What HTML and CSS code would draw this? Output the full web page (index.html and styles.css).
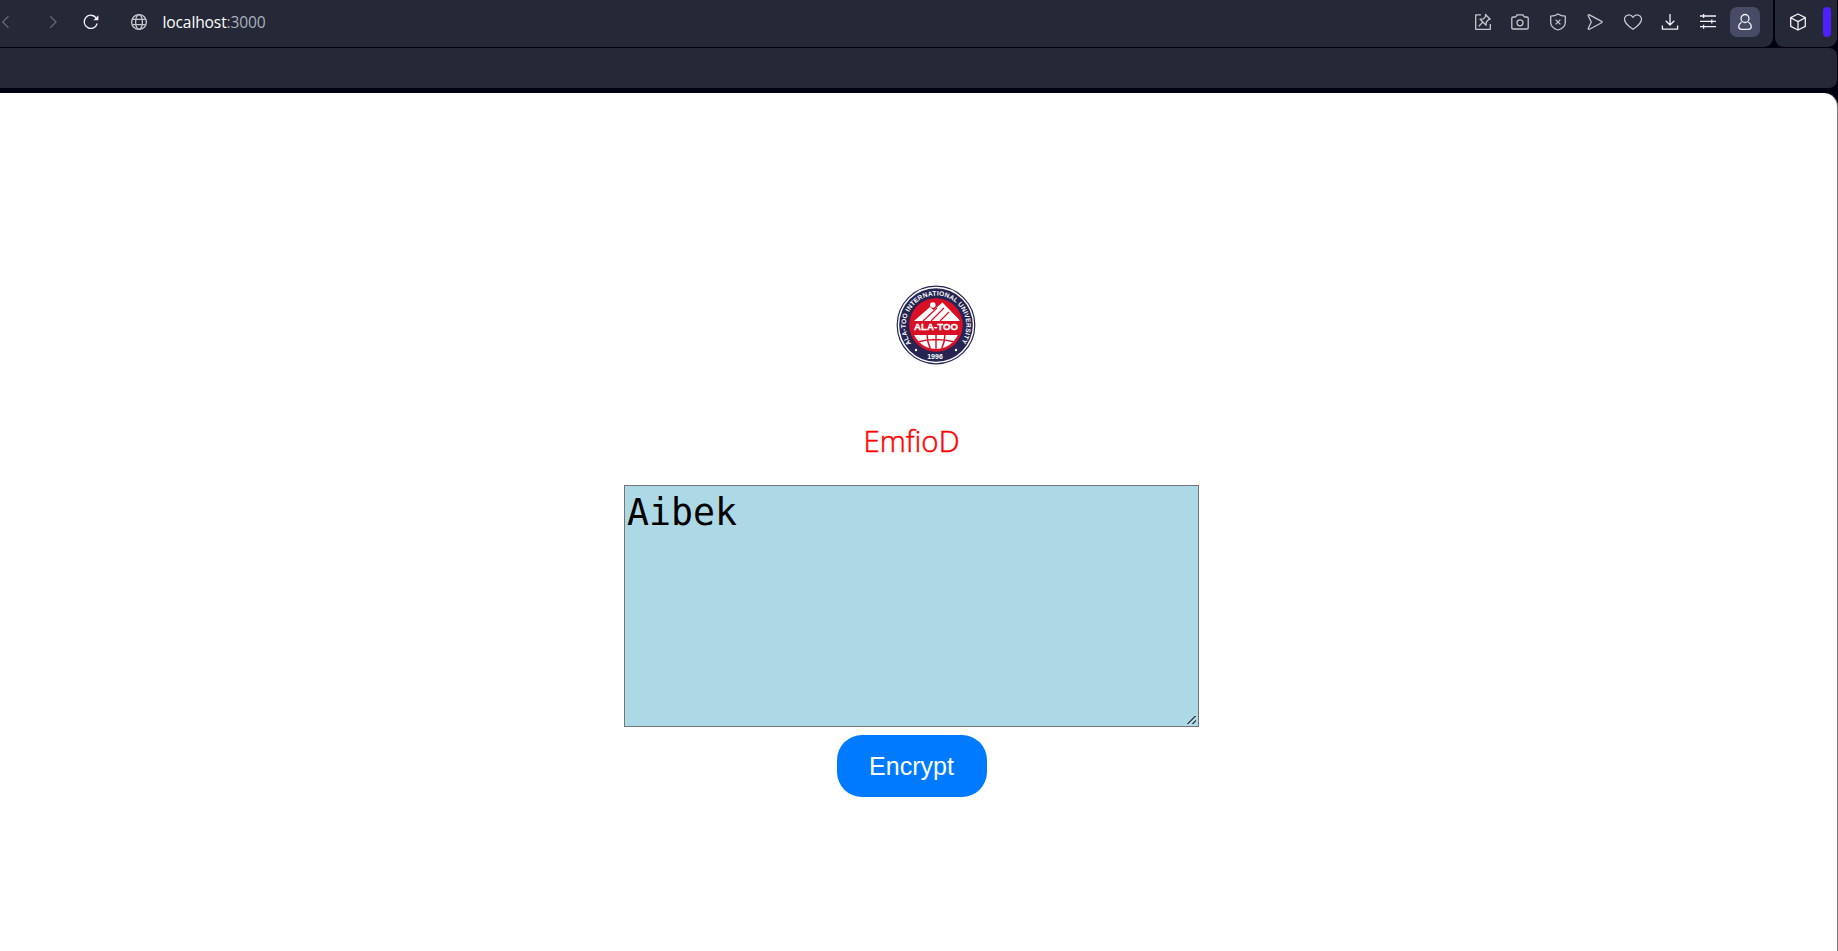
FILE: index.html
```html
<!DOCTYPE html>
<html lang="en">
<head>
<meta charset="utf-8">
<title>localhost:3000</title>
<link rel="stylesheet" href="styles.css">
</head>
<body>
<div class="window">
  <div class="toolbar">
    <div class="address">
      <div class="nav">
        <svg class="icon dim back" viewBox="0 0 16 16"><path d="M11.5 2.3 5.7 8l5.800 5.700"/></svg>
        <svg class="icon dim forward" viewBox="0 0 16 16"><path d="M5.200 2.300 11 8l-5.800 5.700"/></svg>
        <svg class="icon bright reload" viewBox="0 0 16 16"><path d="M14.200 9.500A6.600 6.600 0 1 1 13.200 4"/><path class="solid" d="M15.400 1.300v5h-5z"/></svg>
        <svg class="icon globe" viewBox="0 0 16 16"><circle cx="8" cy="8" r="7.400"/><ellipse cx="8" cy="8" rx="3.400" ry="7.400"/><path d="M1.400 5.300h13.200M1.400 10.700h13.200"/></svg>
      </div>
      <div class="url"><span class="host">localhost</span>:3000</div>
      <div class="actions">
        <svg class="icon tool" viewBox="0 0 18 18"><path d="M7 1.800H1.700v14.500h14.600V11"/><path d="m11.500 1.500 4.700 4.700-1.500.3-2.400 2.500-.2 3.200-6-6 3.300-.3 2.300-2.500zM8.800 9.100l-4 4.200"/></svg>
        <svg class="icon tool" viewBox="0 0 18 18"><path d="M.8 5.200q0-1.200 1.200-1.200h2.700L6 1.800h6L13.300 4H16q1.200 0 1.200 1.200v9.600q0 1.200-1.200 1.200H2Q.8 16 .8 14.800z"/><circle cx="9" cy="9.800" r="3"/></svg>
        <svg class="icon tool" viewBox="0 0 18 18"><path d="M9 1q3 2.200 7.300 2.200v6.300q0 5.200-7.300 7.500-7.300-2.300-7.300-7.500V3.200Q6 3.200 9 1z"/><path d="m6.600 6.600 4.800 4.800m0-4.800-4.800 4.800"/></svg>
        <svg class="icon tool send" viewBox="0 0 18 18"><path d="M3 1.700 15.600 8.300q1.100.7 0 1.400L3.500 16.200q-1.500.5-1.200-1L5.300 9 2.200 2.700q-.1-1 .8-1z"/></svg>
        <svg class="icon tool" viewBox="0 0 18 18"><path d="M9 16.300C5 13.500.5 10.500.5 6.200.5 1.600 6.500.3 9 4.300c2.500-4 8.500-2.700 8.500 1.900 0 4.300-4.500 7.300-8.500 10.100z"/></svg>
        <svg class="icon tool bright" viewBox="0 0 18 18"><path d="M9 1v10.700M4.700 7.700 9 12l4.300-4.300M1.400 12.500v3.700h15.200v-3.700"/></svg>
        <svg class="icon tool bright" viewBox="0 0 18 18"><path d="M1 3h16M1 8.400h16M1 13.700h16M4.600 1v4M12.800 6.400v4M4.600 11.700v4"/></svg>
        <div class="profile"><svg class="icon tool bright" viewBox="0 0 18 18"><circle cx="9" cy="5.500" r="4"/><path d="M5.500 9.300Q2.700 11 2.700 13.600q0 2.700 3 2.700h6.600q3 0 3-2.700 0-2.600-2.800-4.300"/></svg></div>
      </div>
    </div>
    <div class="extension">
      <svg class="icon tool bright" viewBox="0 0 18 18"><path d="m9 1 7.300 3.700v8.600L9 17l-7.300-3.700V4.700zM1.700 4.700 9 8.600l7.300-3.900M9 8.600V17"/></svg>
      <span class="accent"></span>
    </div>
  </div>
  <div class="bookmarks"></div>
  <main class="page">
    <svg class="logo" viewBox="0 0 80 80">
      <defs>
        <path id="ring-text" d="M15.400 58.500A30.300 30.300 0 1 1 64.600 58.500"/>
        <clipPath id="core"><circle cx="40" cy="40" r="24"/></clipPath>
      </defs>
      <circle class="white" cx="40" cy="40" r="39"/>
      <circle class="rim" cx="40" cy="40" r="38.800"/>
      <circle class="navy" cx="40" cy="40" r="36.800"/>
      <circle class="red" cx="40" cy="40" r="26.800"/>
      <g clip-path="url(#core)">
        <path class="white" d="M18 36 34 22l3.500 3 9-7.500 18 18.500z"/>
        <path class="slope" d="m27 36 14-13M35 36l13-13M44 36l9-9"/>
        <circle class="white" cx="36.800" cy="20" r="2.800"/>
        <path class="white" d="M16 50h48q-5 17-24 17T16 50z"/>
        <path class="grid" d="M40 49v18M31 49q0 9 5 18M49 49q0 9-5 18M21 57q19-5 38 0"/>
      </g>
      <text class="name" x="40" y="45.300" textLength="44" lengthAdjust="spacingAndGlyphs">ALA-TOO</text>
      <text class="ring"><textPath href="#ring-text" textLength="131">ALA-TOO INTERNATIONAL UNIVERSITY</textPath></text>
      <text class="year" x="39" y="74">1996</text>
      <circle class="white" cx="20" cy="65" r="1.200"/><circle class="white" cx="60" cy="65" r="1.200"/>
    </svg>
    <div class="result">EmfioD</div>
    <textarea class="message" spellcheck="false">Aibek</textarea>
    <button class="encrypt" type="button">Encrypt</button>
  </main>
</div>
</body>
</html>
```
FILE: styles.css
```css
* { box-sizing: border-box; }
body { margin: 0; background: #000212; overflow: hidden; }
.window { height: 951px; display: flex; flex-direction: column; }
.toolbar { display: flex; gap: 2px; height: 47px; padding-right: 1px; }
.address { flex: 1; display: flex; align-items: center; background: #252836; border-radius: 0 0 9px 0; padding-bottom: 3px; }
.extension { width: 62px; background: #252836; border-radius: 0 0 9px 9px; display: flex; align-items: center; padding: 0 6px 3px 14px; justify-content: space-between; }
.accent { width: 8px; height: 30px; border-radius: 4px; background: #4f20ff; }
.icon { width: 16px; height: 16px; fill: none; stroke: #c3c8cd; stroke-width: 1.3; stroke-linejoin: round; flex: none; }
.dim { stroke: #626675; }
.bright { stroke: #f0f1f4; }
.solid { fill: #f0f1f4; stroke: none; }
.nav { display: flex; align-items: center; width: 162px; flex: none; }
.back { margin-left: -3px; }
.forward { margin-left: 32px; }
.reload { margin-left: 22px; }
.globe { margin-left: 32px; }
.url { flex: 1; font: 15.6px/20px "Open Sans", sans-serif; color: #a9b0bd; letter-spacing: -0.14px; padding-left: 0.5px; }
.host { color: #fff; }
.tool { width: 18px; height: 18px; }
.actions { display: flex; align-items: center; gap: 19.5px; padding-right: 13px; }
.profile { width: 30px; height: 30px; border-radius: 7px; background: #484b65; display: grid; place-items: center; margin-left: -6px; }
.bookmarks { height: 40px; margin: 1px 1px 5px 0; background: #252836; border-radius: 0 8px 8px 0; flex: none; }
.page { flex: 1; background: #fff; border-right: 1px solid #777; border-radius: 0 14px 0 0; padding-right: 14px; display: flex; flex-direction: column; align-items: center; }
.logo { width: 80px; height: 80px; margin: 191.5px 0 0 49px; flex: none; font-family: "Liberation Sans", sans-serif; font-weight: 700; }
.white { fill: #fff; }
.navy { fill: #252453; }
.red { fill: #d80f25; }
.rim { fill: none; stroke: #252453; stroke-width: 1.2; }
.slope { fill: none; stroke: #d80f25; stroke-width: 1.2; }
.grid { fill: none; stroke: #d80f25; stroke-width: 1.4; }
.name { fill: #fff; font-size: 9px; text-anchor: middle; stroke: #fff; stroke-width: 0.3; }
.ring { fill: #fff; font-size: 6.6px; }
.year { fill: #fff; font-size: 7px; text-anchor: middle; }
.result { margin-top: 56.5px; height: 40px; font: 29.5px/40px "Open Sans", sans-serif; font-weight: 300; -webkit-text-stroke: 0.5px red; color: red; }
.message { margin: 24px 0 0; width: 575px; height: 242px; padding: 3px 2px 2px; border: 1px solid #767676; border-radius: 0; background: lightblue; color: #000; font: 36.5px/47px "DejaVu Sans Mono", monospace; outline: 0; resize: both; flex: none; }
.message::-webkit-resizer { background: linear-gradient(135deg, transparent 46%, #444b50 47% 57%, transparent 58% 73%, #444b50 74% 86%, transparent 87%) 4px 5px / 9px 8px no-repeat; }
.encrypt { margin-top: 8px; width: 150px; height: 62px; padding: 0; border: 0; border-radius: 25px; background: #007bff; color: #fff; font: 25px "Liberation Sans", Arial, sans-serif; flex: none; }
```
